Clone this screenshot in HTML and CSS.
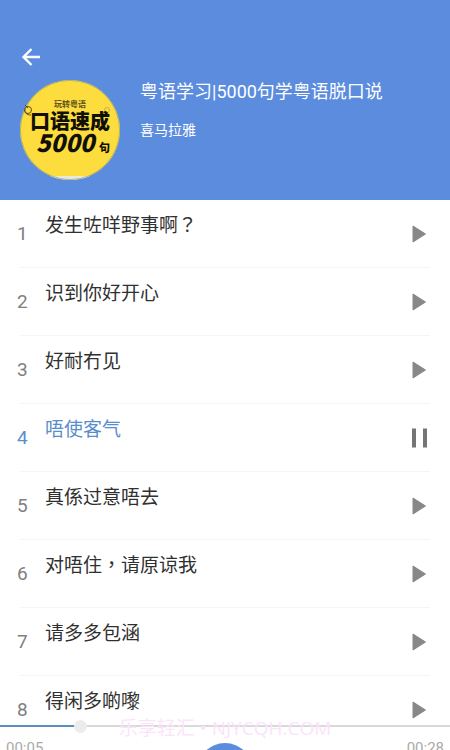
FILE: index.html
```html
<!DOCTYPE html>
<html lang="zh-CN">
<head>
<meta charset="utf-8">
<meta name="viewport" content="width=device-width, initial-scale=1">
<title>粤语学习</title>
<link rel="stylesheet" href="styles.css">
</head>
<body>
<header class="header">
  <button class="back" type="button" aria-label="返回">
    <svg width="20" height="20" viewBox="0 0 20 20"><path d="M19 10H3M10.500 2L2.500 10l8 8" fill="none" stroke="#fff" stroke-width="2.400"/></svg>
  </button>
  <div class="album">
    <svg class="cover" width="100" height="100" viewBox="0 0 100 100" role="img" aria-label="口语速成5000句">
      <defs><clipPath id="disc"><circle cx="50" cy="50" r="50"/></clipPath></defs>
      <g clip-path="url(#disc)">
        <rect width="100" height="100" fill="#fddc3e"/>
        <rect y="96" width="100" height="4" fill="#e9e9e4"/>
      </g>
      <circle cx="50" cy="50" r="49.600" fill="none" stroke="#a5a96c" stroke-width=".8"/>
      <g fill="none" stroke="#5c5218" stroke-width="1"><circle cx="8" cy="30" r="3.500"/><path d="M5 25l3 3m-3 1c-1 4 2 6 6 6"/></g>
      <g fill="none" stroke="#c3a932" stroke-width=".8"><circle cx="87" cy="30" r="2.500"/><path d="M85 32l-2 2"/></g>
      <text class="cover-small" x="34" y="27">玩转粤语</text>
      <text class="cover-main" x="10" y="49">口语速成</text>
      <text class="cover-number" x="16" y="72">5000</text>
      <text class="cover-unit" x="79" y="72">句</text>
    </svg>
    <div class="info">
      <h1 class="title">粤语学习|5000句学粤语脱口说</h1>
      <p class="artist">喜马拉雅</p>
    </div>
  </div>
</header>
<main class="content">
  <ol class="tracks">
    <li class="track"><span class="index">1</span><span class="name">发生咗咩野事啊<span class="mark" lang="zh-TW">？</span></span><button class="toggle" type="button" aria-label="播放"><svg width="16" height="20" viewBox="0 0 16 20"><path d="M2 2L14.500 10 2 18z" fill="#888" stroke="#888" stroke-linejoin="round"/></svg></button></li>
    <li class="track"><span class="index">2</span><span class="name">识到你好开心</span><button class="toggle" type="button" aria-label="播放"><svg width="16" height="20" viewBox="0 0 16 20"><path d="M2 2L14.500 10 2 18z" fill="#888" stroke="#888" stroke-linejoin="round"/></svg></button></li>
    <li class="track"><span class="index">3</span><span class="name">好耐冇见</span><button class="toggle" type="button" aria-label="播放"><svg width="16" height="20" viewBox="0 0 16 20"><path d="M2 2L14.500 10 2 18z" fill="#888" stroke="#888" stroke-linejoin="round"/></svg></button></li>
    <li class="track active"><span class="index">4</span><span class="name">唔使客气</span><button class="toggle" type="button" aria-label="暂停"><svg width="16" height="20" viewBox="0 0 16 20"><path d="M1 .5h4v19H1zM12 .5h4v19h-4z" fill="#757575"/></svg></button></li>
    <li class="track"><span class="index">5</span><span class="name">真係过意唔去</span><button class="toggle" type="button" aria-label="播放"><svg width="16" height="20" viewBox="0 0 16 20"><path d="M2 2L14.500 10 2 18z" fill="#888" stroke="#888" stroke-linejoin="round"/></svg></button></li>
    <li class="track"><span class="index">6</span><span class="name">对唔住<span class="mark" lang="zh-TW">，</span>请原谅我</span><button class="toggle" type="button" aria-label="播放"><svg width="16" height="20" viewBox="0 0 16 20"><path d="M2 2L14.500 10 2 18z" fill="#888" stroke="#888" stroke-linejoin="round"/></svg></button></li>
    <li class="track"><span class="index">7</span><span class="name">请多多包涵</span><button class="toggle" type="button" aria-label="播放"><svg width="16" height="20" viewBox="0 0 16 20"><path d="M2 2L14.500 10 2 18z" fill="#888" stroke="#888" stroke-linejoin="round"/></svg></button></li>
    <li class="track"><span class="index">8</span><span class="name">得闲多啲嚟</span><button class="toggle" type="button" aria-label="播放"><svg width="16" height="20" viewBox="0 0 16 20"><path d="M2 2L14.500 10 2 18z" fill="#888" stroke="#888" stroke-linejoin="round"/></svg></button></li>
  </ol>
</main>
<footer class="player">
  <input class="seek" type="range" min="0" max="28" step="any" value="4.750" aria-label="播放进度">
  <div class="controls">
    <span class="time">00:05</span>
    <button class="main-play" type="button" aria-label="暂停"></button>
    <span class="time">00:28</span>
  </div>
  <span class="watermark">乐享轻汇 • NJYCQH.COM</span>
</footer>
</body>
</html>
```

FILE: styles.css
```css
* {
  box-sizing: border-box;
}

body {
  display: flex;
  flex-direction: column;
  height: 100vh;
  margin: 0;
  overflow: hidden;
  background: #fff;
  color: #303030;
  font-family: Roboto, "Noto Sans CJK SC", sans-serif;
}

button {
  display: flex;
  padding: 0;
  border: 0;
  background: none;
}

.header {
  flex: none;
  padding: 47px 20px 20px;
  background: #5b8cde;
  color: #fff;
}

.album {
  display: flex;
  gap: 20px;
  margin-top: 13px;
}

.cover {
  flex: none;
}

.cover text {
  fill: #111006;
  font-family: "Noto Sans CJK SC", sans-serif;
  font-weight: 900;
}

.cover .cover-small {
  fill: #62531a;
  font-size: 8px;
  font-weight: 700;
}

.cover .cover-main {
  font-size: 20px;
}

.cover .cover-number {
  font-size: 24px;
  font-style: italic;
}

.cover .cover-unit {
  font-size: 11px;
}

.back {
  margin-left: 1px;
}

.title {
  margin: 0;
  font-size: 18px;
  font-weight: 400;
  line-height: 24px;
}

.artist {
  margin: 16px 0 0;
  font-size: 14px;
  line-height: 20px;
}

.content {
  flex: 1;
  min-height: 0;
  overflow: hidden;
}

.tracks {
  margin: 0;
  padding: 0 20px;
  list-style: none;
}

.track {
  display: flex;
  align-items: center;
  height: 68px;
  padding-right: 3px;
  border-bottom: 1px solid #f5f5f5;
}

.index {
  width: 26px;
  margin-left: -3px;
  color: #808080;
  font-size: 19px;
  line-height: 24px;
}

.name {
  flex: 1;
  align-self: flex-start;
  padding: 12px 0 0 2px;
  font-size: 19px;
  line-height: 28px;
}

.mark {
  font-family: "Noto Sans CJK TC", sans-serif;
  line-height: 1;
}

.active .index,
.active .name {
  color: #5a8ecb;
}

.player {
  position: relative;
  flex: none;
  height: 31px;
}

.seek {
  display: block;
  width: 100%;
  height: 14px;
  margin: 0;
  appearance: none;
  background: linear-gradient(#5c8fbb, #5c8fbb) left center / 18% 2px no-repeat,
    linear-gradient(#d9d9d9, #d9d9d9) center / 100% 2px no-repeat;
}

.seek::-webkit-slider-thumb {
  width: 13px;
  height: 13px;
  appearance: none;
  border-radius: 50%;
  background: #ececec;
}

.controls {
  display: flex;
  justify-content: space-between;
  align-items: flex-start;
  height: 17px;
  padding: 0 6px;
  overflow: hidden;
}

.time {
  padding-top: 6px;
  color: #aaa;
  font-size: 15px;
  line-height: 18px;
}

.main-play {
  width: 56px;
  height: 56px;
  margin-top: 10px;
  border-radius: 50%;
  background: #5b8cde;
}

.watermark {
  position: absolute;
  top: -4px;
  left: 0;
  width: 100%;
  color: #fbe4fb;
  font-family: "Open Sans", "Noto Sans CJK SC", sans-serif;
  font-size: 19px;
  line-height: 26px;
  text-align: center;
  pointer-events: none;
}
```
